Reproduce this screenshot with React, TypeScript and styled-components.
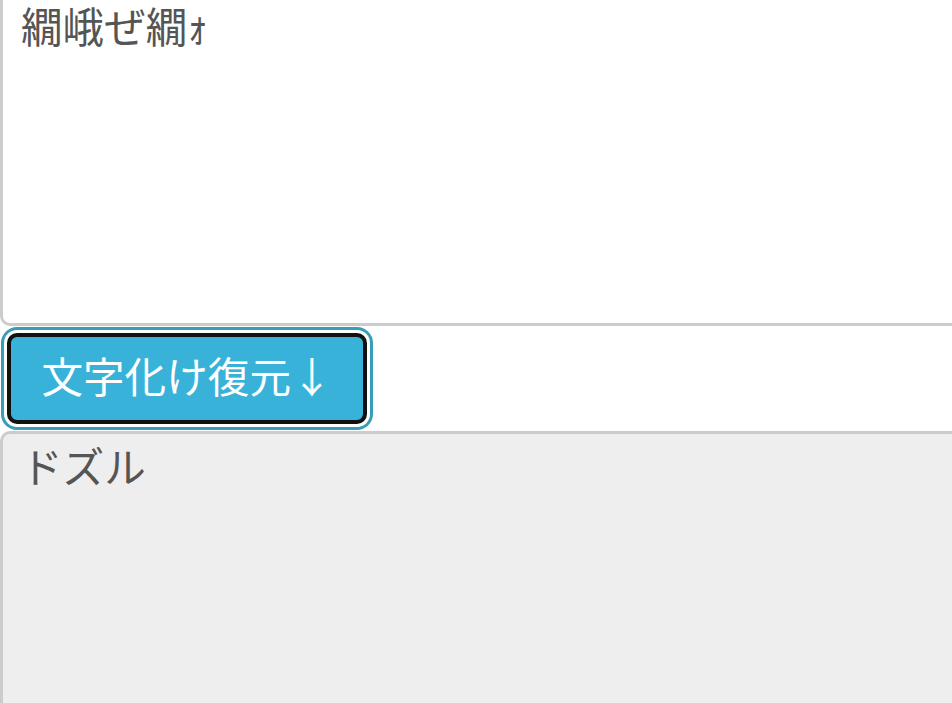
import styled, { createGlobalStyle } from "styled-components";

const GlobalStyle = createGlobalStyle`
  html, body {
    margin: 0;
    padding: 0;
    background: #ffffff;
    overflow: hidden;
  }
  body {
    font-family: "Noto Sans CJK JP", "Noto Sans", sans-serif;
  }
`;

const Page = styled.div`
  width: 1000px;
  margin-top: -9px;
  display: flex;
  flex-direction: column;
  align-items: flex-start;
`;

const TextBox = styled.textarea<{ $readOnly?: boolean }>`
  box-sizing: border-box;
  display: block;
  width: 1000px;
  height: ${(p) => (p.$readOnly ? "320px" : "335px")};
  margin: 0;
  padding: 2px 18px;
  border: 3px solid #cccccc;
  border-radius: 10px;
  background: ${(p) => (p.$readOnly ? "#eeeeee" : "#ffffff")};
  color: #555555;
  font-family: "Noto Sans CJK JP", "Noto Sans", sans-serif;
  font-size: 41.6px;
  line-height: 1.43;
  resize: none;
  outline: none;
`;

const ConvertButton = styled.button`
  box-sizing: border-box;
  width: 360px;
  height: 91px;
  margin: 7px 0 7px 7px;
  padding: 0 0 6px;
  border: 4px solid #111111;
  border-radius: 10px;
  background: #38b2d9;
  color: #ffffff;
  font-family: "Noto Sans CJK JP", "Noto Sans", sans-serif;
  font-size: 41.6px;
  line-height: 1;
  box-shadow: 0 0 0 3px #ffffff, 0 0 0 6px #3a9db8;
  cursor: pointer;
`;

export default function App() {
  return (
    <>
      <GlobalStyle />
      <Page>
        <TextBox defaultValue="繝峨ぜ繝ｫ" />
        <ConvertButton>文字化け復元↓</ConvertButton>
        <TextBox $readOnly readOnly value="ドズル" />
      </Page>
    </>
  );
}
